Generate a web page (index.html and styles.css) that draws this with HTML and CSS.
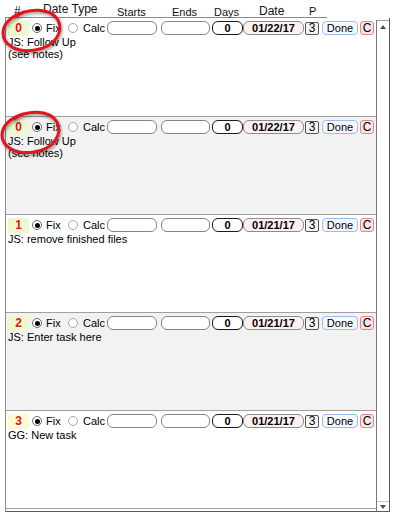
FILE: index.html
```html
<!DOCTYPE html>
<html>
<head>
<meta charset="utf-8">
<link rel="stylesheet" href="styles.css">
</head>
<body>
<div class="header">
  <span class="h h-hash">#</span>
  <span class="h h-type">Date Type</span>
  <span class="h h-starts">Starts</span>
  <span class="h h-ends">Ends</span>
  <span class="h h-days">Days</span>
  <span class="h h-date">Date</span>
  <span class="h h-p">P</span>
</div>
<div class="panel">
  <div class="list">
    <div class="row first">
      <div class="line1">
        <span class="num">0</span>
        <span class="radio on"></span><span class="lbl fix">Fix</span>
        <span class="radio"></span><span class="lbl calc">Calc</span>
        <span class="box starts"></span>
        <span class="box ends"></span>
        <span class="box days">0</span>
        <span class="box date">01/22/17</span>
        <span class="pbox">3</span>
        <span class="btn done">Done</span>
        <span class="btn cbtn">C</span>
      </div>
      <div class="note">JS: Follow Up<br>(see notes)</div>
    </div>
    <div class="row alt">
      <div class="line1">
        <span class="num">0</span>
        <span class="radio on"></span><span class="lbl fix">Fix</span>
        <span class="radio"></span><span class="lbl calc">Calc</span>
        <span class="box starts"></span>
        <span class="box ends"></span>
        <span class="box days">0</span>
        <span class="box date">01/22/17</span>
        <span class="pbox">3</span>
        <span class="btn done">Done</span>
        <span class="btn cbtn">C</span>
      </div>
      <div class="note">JS: Follow Up<br>(see notes)</div>
    </div>
    <div class="row">
      <div class="line1">
        <span class="num">1</span>
        <span class="radio on"></span><span class="lbl fix">Fix</span>
        <span class="radio"></span><span class="lbl calc">Calc</span>
        <span class="box starts"></span>
        <span class="box ends"></span>
        <span class="box days">0</span>
        <span class="box date">01/21/17</span>
        <span class="pbox">3</span>
        <span class="btn done">Done</span>
        <span class="btn cbtn">C</span>
      </div>
      <div class="note">JS: remove finished files</div>
    </div>
    <div class="row alt">
      <div class="line1">
        <span class="num">2</span>
        <span class="radio on"></span><span class="lbl fix">Fix</span>
        <span class="radio"></span><span class="lbl calc">Calc</span>
        <span class="box starts"></span>
        <span class="box ends"></span>
        <span class="box days">0</span>
        <span class="box date">01/21/17</span>
        <span class="pbox">3</span>
        <span class="btn done">Done</span>
        <span class="btn cbtn">C</span>
      </div>
      <div class="note">JS: Enter task here</div>
    </div>
    <div class="row">
      <div class="line1">
        <span class="num yellow">3</span>
        <span class="radio on"></span><span class="lbl fix">Fix</span>
        <span class="radio"></span><span class="lbl calc">Calc</span>
        <span class="box starts"></span>
        <span class="box ends"></span>
        <span class="box days">0</span>
        <span class="box date">01/21/17</span>
        <span class="pbox">3</span>
        <span class="btn done">Done</span>
        <span class="btn cbtn">C</span>
      </div>
      <div class="note">GG: New task</div>
    </div>
  </div>
  <div class="scrollbar">
    <div class="sb-btn"><span class="arrow-up"></span></div>
    <div class="sb-track"></div>
    <div class="sb-btn sb-bottom"><span class="arrow-down"></span></div>
  </div>
</div>
<svg class="annot" width="80" height="170" viewBox="0 0 80 170">
  <path class="loop" d="M 15 17 C 27 8, 50 7, 58 20 C 64 32, 55 47, 35 50 C 17 53, 3 45, 3 33 C 3 24, 11 16, 24 12"/>
  <path class="loop" transform="translate(-1,102)" d="M 15 17 C 27 8, 50 7, 58 20 C 64 32, 55 47, 35 50 C 17 53, 3 45, 3 33 C 3 24, 11 16, 24 12"/>
</svg>
</body>
</html>
```

FILE: styles.css
```css
html, body {
  margin: 0;
  padding: 0;
  background: #ffffff;
}
body {
  font-family: "Liberation Sans", Arial, sans-serif;
  color: #000;
  position: relative;
  width: 393px;
  height: 517px;
  overflow: hidden;
}

/* header */
.header {
  margin-left: 5px;
  width: 313px;
  height: 17px;
  border-bottom: 1px solid #8a8a8a;
  display: flex;
  align-items: flex-start;
  padding-left: 9px;
  box-sizing: content-box;
}
.header .h {
  display: block;
  white-space: nowrap;
  color: #111;
}
.h-hash { width: 29px; font-size: 12px; line-height: 12px; padding-top: 5px; }
.h-type { width: 74px; font-size: 12px; line-height: 12px; padding-top: 3px; }
.h-starts { width: 55px; font-size: 11px; line-height: 11px; padding-top: 7px; }
.h-ends { width: 42px; font-size: 11px; line-height: 11px; padding-top: 7px; }
.h-days { width: 45px; font-size: 11px; line-height: 11px; padding-top: 7px; }
.h-date { width: 50px; font-size: 12px; line-height: 12px; padding-top: 5px; }
.h-p { font-size: 11px; line-height: 11px; padding-top: 6px; }

/* panel */
.panel {
  margin-left: 5px;
  width: 385px;
  height: 494px;
  box-sizing: border-box;
  border-left: 1px solid #8a8a8a;
  border-right: 1px solid #5a5a5a;
  border-bottom: 1px solid #5a5a5a;
  display: flex;
}
.list {
  width: 370px;
  overflow: hidden;
}
.row {
  height: 98px;
  box-sizing: border-box;
  border-bottom: 1px solid #a0a0a0;
  background: #ffffff;
}
.row.first { height: 99px; }
.row.alt { background: #f2f2f2; }

.line1 {
  display: flex;
  align-items: center;
  height: 16px;
  padding-top: 2px;
  padding-left: 2px;
}
.num {
  width: 21px;
  height: 15px;
  background: #ecf9cc;
  color: #e3121b;
  font-weight: bold;
  font-size: 12px;
  line-height: 15px;
  text-align: center;
  flex: none;
}
.num.yellow { background: #fff9d2; }

.radio {
  width: 10px;
  height: 10px;
  box-sizing: border-box;
  border: 1px solid #a8a8a8;
  border-radius: 50%;
  background: #fff;
  margin-left: 3px;
  flex: none;
  display: flex;
  align-items: center;
  justify-content: center;
}
.radio.on { border-color: #6a6a6a; }
.radio.on::after {
  content: "";
  width: 5px;
  height: 5px;
  border-radius: 50%;
  background: #000;
}
.lbl {
  font-size: 11px;
  line-height: 12px;
  flex: none;
  box-sizing: border-box;
}
.lbl.fix { width: 26px; padding-left: 4px; }
.lbl.calc { width: 29px; padding-left: 5px; }
.lbl.fix + .radio { margin-left: 0; }

.box {
  height: 14px;
  box-sizing: border-box;
  border: 1px solid #858585;
  border-radius: 6px;
  background: #fff;
  font-size: 11px;
  line-height: 12px;
  font-weight: bold;
  text-align: center;
  flex: none;
}
.box.starts { width: 50px; }
.box.ends { width: 49px; margin-left: 4px; }
.box.days { width: 31px; margin-left: 2px; border-color: #1a1a1a; }
.box.date { width: 61px; background: #fdf1f1; border-color: #8c8c8c; }

.pbox {
  width: 14px;
  height: 13px;
  box-sizing: border-box;
  border: 1px solid #555;
  border-radius: 2px;
  background: #f6f6f6;
  margin-left: 1px;
  font-size: 12px;
  line-height: 11px;
  text-align: center;
  flex: none;
}
.btn {
  height: 14px;
  box-sizing: border-box;
  font-size: 11px;
  line-height: 12px;
  text-align: center;
  flex: none;
}
.btn.done {
  width: 36px;
  margin-left: 3px;
  border: 1px solid #9dbcf3;
  border-radius: 4px;
  background: #f5f8fe;
}
.btn.cbtn {
  width: 14px;
  margin-left: 2px;
  border: 1px solid #ee8585;
  border-radius: 3px;
  background: #fde5e5;
  font-size: 12px;
}

.note {
  font-size: 11px;
  line-height: 12px;
  padding-left: 2px;
  white-space: nowrap;
}

/* scrollbar */
.scrollbar {
  width: 12px;
  border-left: 1px solid #7a7a7a;
  border-top: 1px solid #9a9a9a;
  margin-top: 2px;
  display: flex;
  flex-direction: column;
  background: #fff;
}
.sb-btn {
  height: 11px;
  display: flex;
  align-items: center;
  justify-content: center;
}
.sb-track { flex: 1; }
.sb-bottom {
  height: 9px;
  border-top: 1px solid #c8c8c8;
}
.arrow-up {
  width: 0;
  height: 0;
  border-left: 3.5px solid transparent;
  border-right: 3.5px solid transparent;
  border-bottom: 4px solid #505050;
}
.arrow-down {
  width: 0;
  height: 0;
  border-left: 3.5px solid transparent;
  border-right: 3.5px solid transparent;
  border-top: 4px solid #505050;
}

/* annotation loops drawn over the list */
.annot {
  position: absolute;
  left: 0;
  top: 0;
  pointer-events: none;
  filter: drop-shadow(1px 2px 1.5px rgba(0, 0, 0, 0.4));
}
.loop {
  fill: none;
  stroke: #e2161c;
  stroke-width: 3;
  stroke-linecap: round;
}
```
